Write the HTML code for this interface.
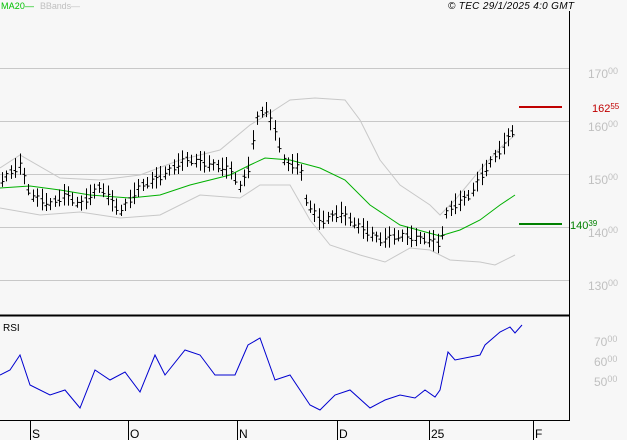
<!DOCTYPE html>
<html><head><style>
body{margin:0;background:#f7f7f7;width:627px;height:440px;overflow:hidden;font-family:"Liberation Sans",sans-serif}
svg{position:absolute;left:0;top:0}
text{font-family:"Liberation Sans",sans-serif}
</style></head><body>
<svg width="627" height="440" xmlns="http://www.w3.org/2000/svg">
<rect width="627" height="440" fill="#f7f7f7"/>
<g stroke="#c8c8c8" stroke-width="1">
<line x1="0" y1="68.5" x2="569" y2="68.5"/><line x1="0" y1="121.5" x2="569" y2="121.5"/>
<line x1="0" y1="174.5" x2="569" y2="174.5"/><line x1="0" y1="227.5" x2="569" y2="227.5"/>
<line x1="0" y1="280.5" x2="569" y2="280.5"/>
</g>
<line x1="569.5" y1="11" x2="569.5" y2="420" stroke="#000"/>
<line x1="0" y1="315.5" x2="570" y2="315.5" stroke="#000" stroke-width="2"/>
<line x1="0" y1="420.5" x2="570" y2="420.5" stroke="#000"/>
<g stroke="#000"><line x1="30.5" y1="420" x2="30.5" y2="440"/><line x1="128.5" y1="420" x2="128.5" y2="440"/><line x1="237.5" y1="420" x2="237.5" y2="440"/><line x1="337.5" y1="420" x2="337.5" y2="440"/><line x1="429.5" y1="420" x2="429.5" y2="440"/><line x1="533.5" y1="420" x2="533.5" y2="440"/></g>
<g font-size="12" fill="#000"><text x="32" y="438">S</text><text x="130" y="438">O</text><text x="239" y="438">N</text><text x="339" y="438">D</text><text x="431" y="438">25</text><text x="535" y="438">F</text></g>
<text x="1" y="9" font-size="9" fill="#00c000" textLength="33">MA20—</text>
<text x="40" y="9" font-size="9" fill="#c0c0c0" textLength="40">BBands—</text>
<text x="448" y="9" font-size="10" font-style="italic" fill="#000" textLength="126">© TEC 29/1/2025 4:0 GMT</text>
<text x="3" y="331" font-size="10" fill="#000">RSI</text>
<g fill="#c0c0c0" font-size="12">
<text x="588" y="78">170<tspan font-size="9" dy="-4">00</tspan></text>
<text x="588" y="131">160<tspan font-size="9" dy="-4">00</tspan></text>
<text x="588" y="184">150<tspan font-size="9" dy="-4">00</tspan></text>
<text x="588" y="237">140<tspan font-size="9" dy="-4">00</tspan></text>
<text x="588" y="290">130<tspan font-size="9" dy="-4">00</tspan></text>
<text x="594" y="346">70<tspan font-size="9" dy="-4">00</tspan></text>
<text x="594" y="366">60<tspan font-size="9" dy="-4">00</tspan></text>
<text x="594" y="386">50<tspan font-size="9" dy="-4">00</tspan></text>
</g>
<line x1="519" y1="107" x2="562" y2="107" stroke="#c00000" stroke-width="2"/>
<text x="592" y="112" font-size="11" fill="#c00000">162<tspan font-size="8" dy="-3">55</tspan></text>
<line x1="519" y1="224" x2="562" y2="224" stroke="#008000" stroke-width="2"/>
<text x="570" y="229" font-size="11" fill="#008000">140<tspan font-size="8" dy="-3">39</tspan></text>
<polyline fill="none" stroke="#c8c8c8" points="0,168 20,155 60,178 100,180 140,175 180,160 220,150 250,125 270,113 290,100 315,98 345,100 360,120 380,160 400,185 430,205 440,215 455,200 480,170 500,148 515,135"/>
<polyline fill="none" stroke="#c8c8c8" points="0,208 40,215 80,212 120,218 160,215 200,195 240,198 260,185 290,185 310,220 330,245 360,255 385,262 410,248 430,250 450,260 480,262 495,265 515,255"/>
<polyline fill="none" stroke="#00b000" points="0,188 30,186 60,190 90,195 130,198 160,195 190,185 230,175 250,165 265,158 290,160 320,168 345,180 370,205 400,225 440,236 460,230 480,220 500,205 515,195"/>
<g id="bars" stroke="#000" stroke-width="1"></g>
<polyline fill="none" stroke="#0000d0" points="0,375 10,370 20,355 30,385 50,395 65,390 80,408 95,370 110,380 125,372 140,392 155,355 165,375 185,350 200,355 215,375 235,375 248,345 260,338 275,380 290,375 310,405 320,410 335,395 350,390 370,408 385,400 400,395 415,398 425,390 435,397 440,390 448,352 455,360 470,357 480,355 485,345 500,332 510,327 515,333 522,325"/>
</svg>
<script>
var P=[[0,182],[20,165],[30,195],[50,205],[65,195],[80,205],[100,187],[120,212],[140,187],[160,177],[185,160],[200,162],[230,170],[240,188],[250,165],[255,122],[265,108],[275,132],[285,165],[300,165],[305,200],[320,222],[340,213],[360,228],[380,240],[400,236],[430,240],[440,246],[445,215],[455,205],[470,195],[480,178],[490,163],[500,150],[515,128]];
function f(x){for(var i=0;i<P.length-1;i++){if(x<=P[i+1][0]){var t=(x-P[i][0])/(P[i+1][0]-P[i][0]);return P[i][1]+t*(P[i+1][1]-P[i][1]);}}return P[P.length-1][1];}
var g=document.getElementById('bars'),s='';
for(var x=2;x<=515;x+=4.4){var c=f(x),r=(Math.sin(x*1.7)*0.5+1)*6+3;var xx=Math.round(x)+0.5;
s+='<line x1="'+xx+'" y1="'+(c-r)+'" x2="'+xx+'" y2="'+(c+r*0.8)+'"/>';
s+='<line x1="'+(xx-2)+'" y1="'+(c+Math.sin(x)*3)+'" x2="'+xx+'" y2="'+(c+Math.sin(x)*3)+'"/>';
s+='<line x1="'+xx+'" y1="'+(c-Math.cos(x)*3)+'" x2="'+(xx+2)+'" y2="'+(c-Math.cos(x)*3)+'"/>';}
g.innerHTML=s;
</script>
</body></html>
